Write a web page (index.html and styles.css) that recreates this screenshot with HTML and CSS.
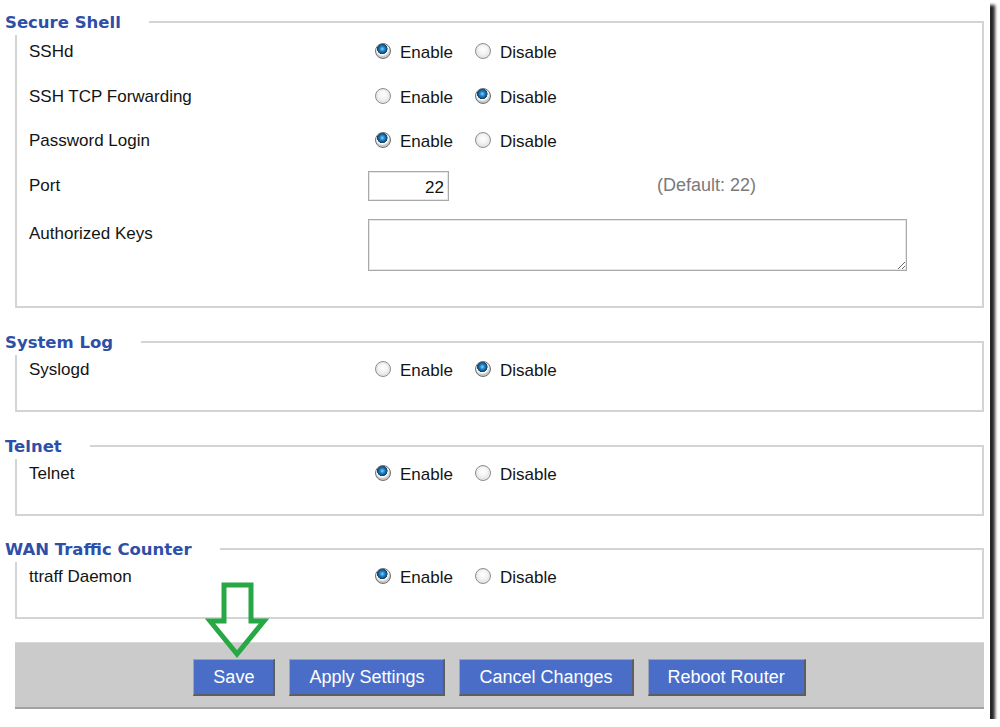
FILE: index.html
```html
<!DOCTYPE html>
<html>
<head>
<meta charset="utf-8">
<title>Services</title>
<link rel="stylesheet" href="styles.css">
</head>
<body>
<div class="frame">
  <div class="group g1">
    <div class="legend">Secure Shell</div>
    <div class="row">
      <div class="label">SSHd</div>
      <div class="radios">
        <label class="opt"><input type="radio" name="sshd" checked><span>Enable</span></label>
        <label class="opt"><input type="radio" name="sshd"><span>Disable</span></label>
      </div>
    </div>
    <div class="row">
      <div class="label">SSH TCP Forwarding</div>
      <div class="radios">
        <label class="opt"><input type="radio" name="fwd"><span>Enable</span></label>
        <label class="opt"><input type="radio" name="fwd" checked><span>Disable</span></label>
      </div>
    </div>
    <div class="row">
      <div class="label">Password Login</div>
      <div class="radios">
        <label class="opt"><input type="radio" name="pw" checked><span>Enable</span></label>
        <label class="opt"><input type="radio" name="pw"><span>Disable</span></label>
      </div>
    </div>
    <div class="row">
      <div class="label">Port</div>
      <input class="port" type="text" value="22">
      <span class="hint">(Default: 22)</span>
    </div>
    <div class="row keys">
      <div class="label">Authorized Keys</div>
      <textarea class="keybox"></textarea>
    </div>
  </div>

  <div class="group g2">
    <div class="legend">System Log</div>
    <div class="row single">
      <div class="label">Syslogd</div>
      <div class="radios">
        <label class="opt"><input type="radio" name="syslog"><span>Enable</span></label>
        <label class="opt"><input type="radio" name="syslog" checked><span>Disable</span></label>
      </div>
    </div>
  </div>

  <div class="group g3">
    <div class="legend">Telnet</div>
    <div class="row single">
      <div class="label">Telnet</div>
      <div class="radios">
        <label class="opt"><input type="radio" name="telnet" checked><span>Enable</span></label>
        <label class="opt"><input type="radio" name="telnet"><span>Disable</span></label>
      </div>
    </div>
  </div>

  <div class="group g4">
    <div class="legend">WAN Traffic Counter</div>
    <div class="row single">
      <div class="label">ttraff Daemon</div>
      <div class="radios">
        <label class="opt"><input type="radio" name="ttraff" checked><span>Enable</span></label>
        <label class="opt"><input type="radio" name="ttraff"><span>Disable</span></label>
      </div>
    </div>
  </div>

  <div class="bar">
    <button class="btn">Save</button>
    <button class="btn">Apply Settings</button>
    <button class="btn">Cancel Changes</button>
    <button class="btn">Reboot Router</button>
  </div>

  <svg class="arrow" width="65" height="85" viewBox="0 0 65 85">
    <polygon points="19,7 46,7 46,43 59,43 32,76 5,43 19,43" fill="none" stroke="#27a844" stroke-width="5" stroke-linejoin="miter"/>
  </svg>
</div>
</body>
</html>
```

FILE: styles.css
```css
html, body {
  margin: 0;
  padding: 0;
  background: #ffffff;
}

.frame {
  position: relative;
  width: 990px;
  height: 719px;
  background: #ffffff;
  box-shadow: 5px 5px 3px rgba(0, 0, 0, 0.85);
  font-family: "Liberation Sans", Arial, sans-serif;
  font-size: 17px;
  color: #141414;
  padding-top: 21px;
  box-sizing: border-box;
}

.group {
  box-sizing: border-box;
  width: 969px;
  margin-left: 15px;
  border: 2px solid #d4d4d4;
  padding-left: 12px;
}

.g1 { padding-bottom: 35px; }
.g2 { margin-top: 33px; padding-bottom: 20px; }
.g3 { margin-top: 33px; padding-bottom: 20px; }
.g4 { margin-top: 32px; padding-bottom: 20px; }

.legend {
  width: fit-content;
  height: 24px;
  line-height: 24px;
  margin: -12px 0 -5px -24px;
  padding-right: 28px;
  background: #ffffff;
  font-family: "DejaVu Sans", Verdana, sans-serif;
  font-weight: bold;
  font-size: 16.5px;
  color: #2e4fa8;
}

.row {
  display: flex;
  align-items: center;
  height: 44.5px;
}

.row.single {
  height: 40px;
}

.row.keys {
  height: auto;
  align-items: flex-start;
  padding-top: 11px;
}

.label {
  width: 339px;
  flex: none;
}

.keys .label {
  margin-top: 5px;
}

.radios {
  display: flex;
  align-items: center;
  padding-left: 7px;
  margin-top: -2px;
}

.opt {
  display: flex;
  align-items: center;
  gap: 9px;
}

.opt + .opt {
  margin-left: 22px;
}

.opt span {
  line-height: 20px;
  margin-top: 4px;
}

.opt input {
  -webkit-appearance: none;
  appearance: none;
  margin: 0;
  width: 16px;
  height: 16px;
  border-radius: 50%;
  border: 1px solid #8e8e8e;
  box-sizing: border-box;
  background: radial-gradient(circle at 50% 40%, #ffffff 0%, #f2f2f2 45%, #cfcfcf 100%);
  box-shadow: inset 0 0 0 1px #e8e8e8;
}

.opt input:checked {
  border-color: #6f6f6f;
  background:
    radial-gradient(circle at 45% 35%, #8fd4ff 0px, #2a8ed0 2px, #0b5c99 4px, #1c3c58 5px, #ffffff 5.5px, #f0f0f0 6.5px, #c8c8c8 7.5px);
  box-shadow: none;
}

.port {
  box-sizing: border-box;
  width: 81px;
  height: 30px;
  margin: 1px 0 0 0;
  border: 1px solid #a9a9a9;
  box-shadow: inset 0 0 0 1px #e6e6e6;
  font-family: "Liberation Sans", Arial, sans-serif;
  font-size: 17px;
  color: #111;
  text-align: right;
  padding: 3px 4px 0 4px;
}

.hint {
  margin-left: 208px;
  font-size: 18px;
  color: #7a7a7a;
}

.keybox {
  box-sizing: border-box;
  width: 539px;
  height: 52px;
  margin: 0;
  border: 1px solid #a9a9a9;
  box-shadow: inset 0 0 0 1px #e6e6e6;
  resize: both;
  font-family: "Liberation Sans", Arial, sans-serif;
}

.bar {
  box-sizing: border-box;
  width: 969px;
  height: 67px;
  margin: 23px 0 0 15px;
  padding-top: 16px;
  background: #cbcbcb;
  border-top: 1px solid #d9d9d9;
  border-bottom: 2px solid #a2a2a2;
  display: flex;
  justify-content: center;
  align-items: flex-start;
  gap: 14px;
}

.btn {
  height: 37px;
  padding: 0 19px;
  background: #4a6ec8;
  color: #ffffff;
  font-family: "Liberation Sans", Arial, sans-serif;
  font-size: 18px;
  border-top: 1px solid #9aa3b8;
  border-left: 1px solid #9aa3b8;
  border-right: 2px solid #5e5e5e;
  border-bottom: 2px solid #5e5e5e;
  cursor: pointer;
}

.arrow {
  position: absolute;
  left: 205px;
  top: 578px;
}
```
